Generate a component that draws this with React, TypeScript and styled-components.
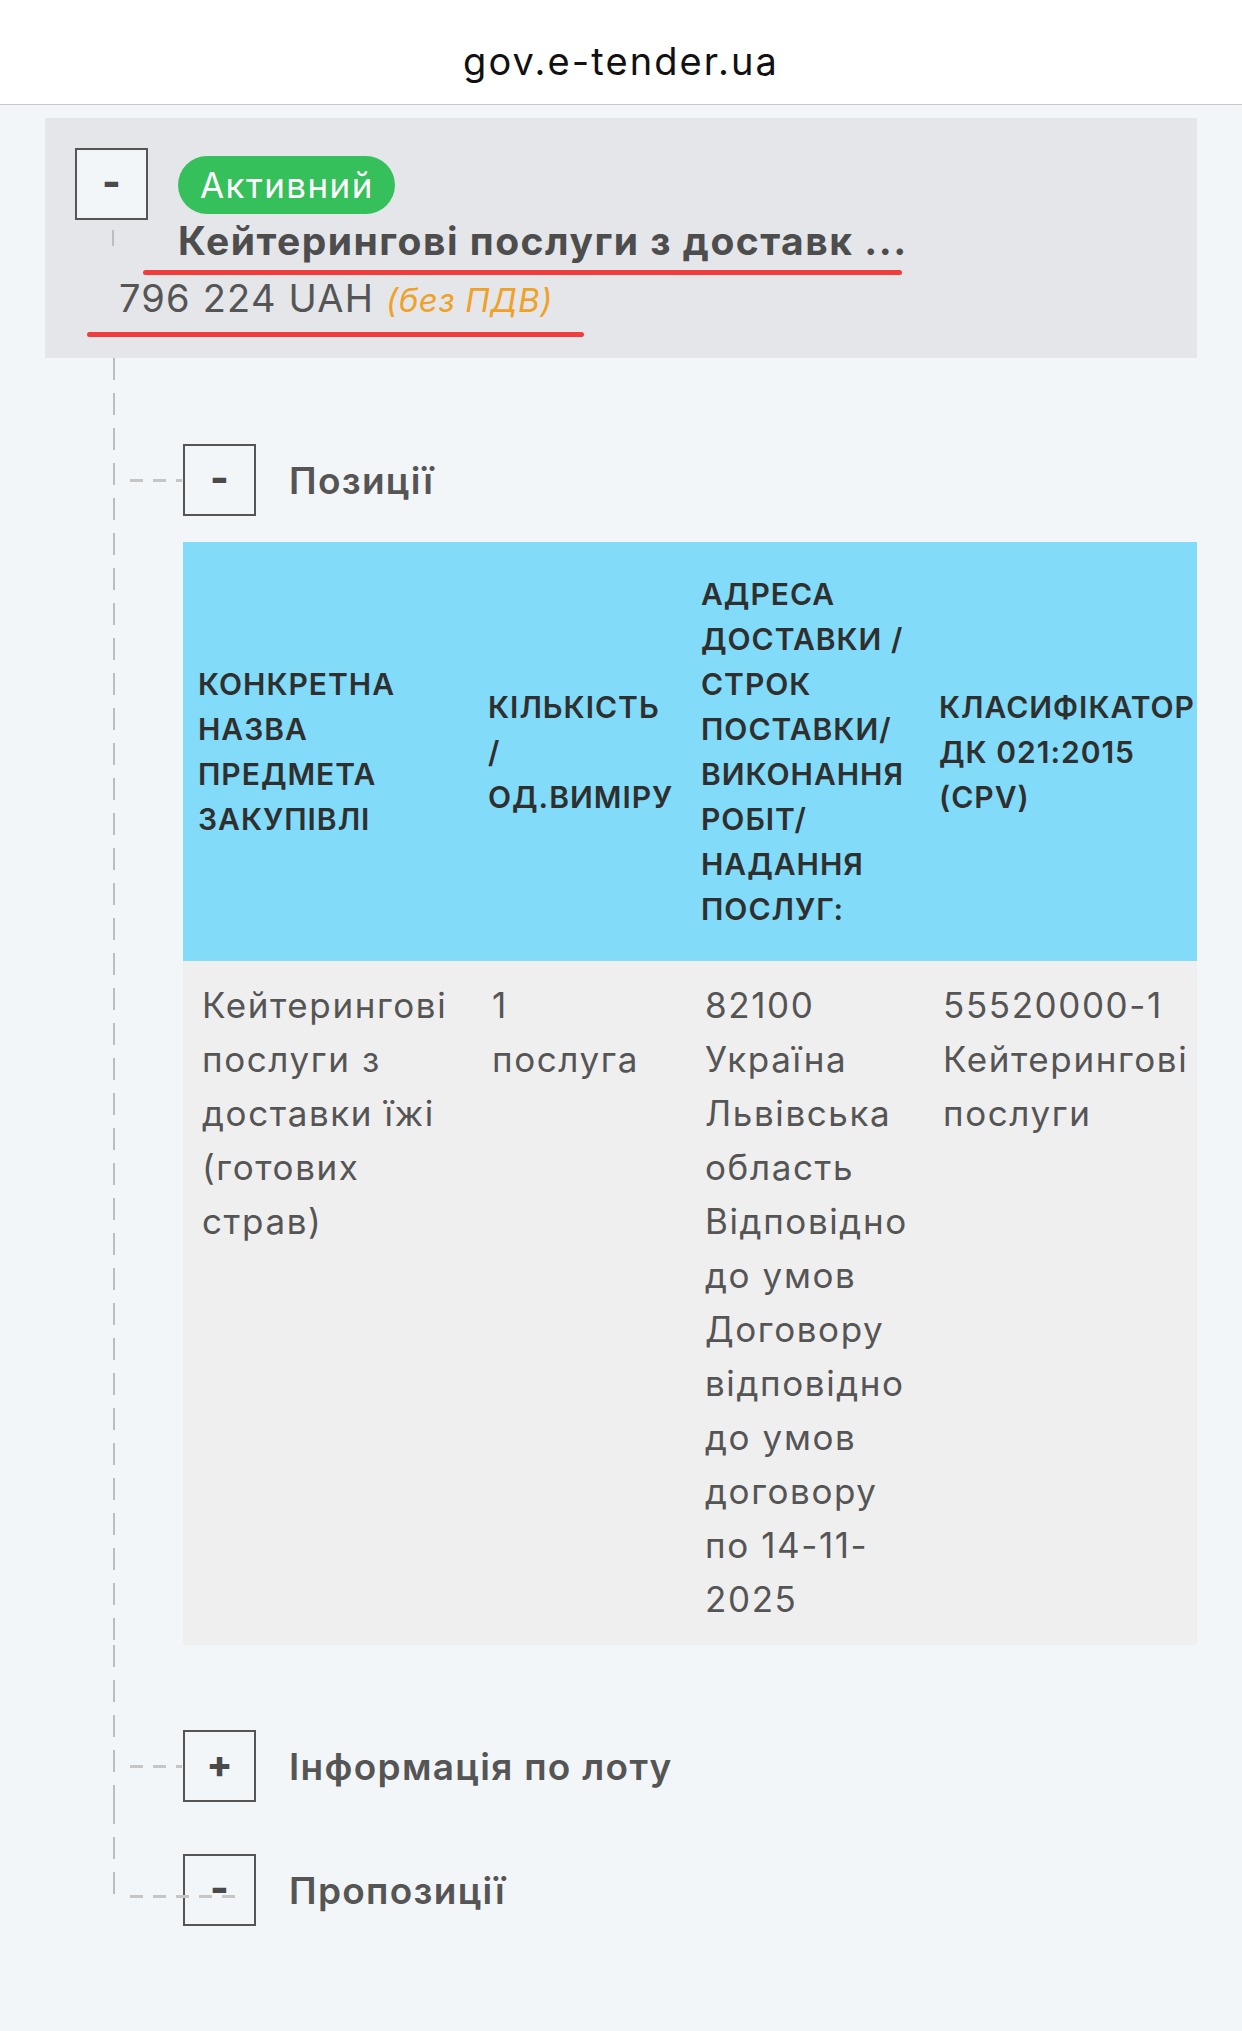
import styled, { createGlobalStyle } from 'styled-components';

const GlobalStyle = createGlobalStyle`
  html, body {
    margin: 0;
    padding: 0;
  }
  body {
    background: #f3f6f9;
    font-family: Inter, "Noto Sans", sans-serif;
    -webkit-font-smoothing: antialiased;
  }
`;

const columns = [290, 213, 238, 300];

const headings = [
  'Конкретна назва предмета закупівлі',
  'Кількість / од.виміру',
  'Адреса доставки / строк поставки/ виконання робіт/ надання послуг:',
  'Класифікатор ДК 021:2015 (CPV)',
];

const App = () => {
  return (
    <Page>
      <GlobalStyle />
      <AddressBar>
        <Url>gov.e-tender.ua</Url>
      </AddressBar>

      <Content>
        <LotCard>
          <LotTop>
            <ToggleCol>
              <Toggle $inCard>-</Toggle>
              <Stub />
            </ToggleCol>
            <LotInfo>
              <Badge>Активний</Badge>
              <LotTitle>Кейтерингові послуги з доставк ...</LotTitle>
              <Marker $offset={-35} $width={759} />
            </LotInfo>
          </LotTop>
          <Price>
            796 224 UAH <NoVat>(без ПДВ)</NoVat>
          </Price>
          <Marker $offset={12} $width={497} $top={10} />
        </LotCard>

        <Tree>
          <Branch $gap={86}>
            <BranchHead>
              <Toggle>-</Toggle>
              <BranchLabel>Позиції</BranchLabel>
            </BranchHead>
            <TableWrap>
              <Table>
                <colgroup>
                  {columns.map((w, i) => (
                    <col key={i} style={{ width: w }} />
                  ))}
                </colgroup>
                <thead>
                  <tr>
                    {headings.map((h) => (
                      <Th key={h}>{h}</Th>
                    ))}
                  </tr>
                </thead>
                <tbody>
                  <tr>
                    <Td>Кейтерингові послуги з доставки їжі (готових страв)</Td>
                    <Td>
                      <Line>1</Line>
                      <Line>послуга</Line>
                    </Td>
                    <Td>
                      82100 Україна Львівська область Відповідно до умов Договору
                      відповідно до умов договору по 14-11-<wbr />2025
                    </Td>
                    <Td>55520000-1 Кейтерингові послуги</Td>
                  </tr>
                </tbody>
              </Table>
            </TableWrap>
          </Branch>

          <Branch $gap={85}>
            <BranchHead>
              <Toggle $plus>+</Toggle>
              <BranchLabel>Інформація по лоту</BranchLabel>
            </BranchHead>
          </Branch>

          <Branch $gap={52} $last>
            <BranchHead>
              <Toggle>-</Toggle>
              <BranchLabel>Пропозиції</BranchLabel>
            </BranchHead>
          </Branch>
        </Tree>
      </Content>
    </Page>
  );
};

export default App;

const Page = styled.div`
  min-height: 2031px;
  background: #f3f6f9;
`;

const AddressBar = styled.header`
  height: 105px;
  box-sizing: border-box;
  padding-top: 18px;
  display: flex;
  align-items: center;
  justify-content: center;
  background: #ffffff;
  border-bottom: 1px solid #c9c9cc;
`;

const Url = styled.div`
  font-size: 38px;
  letter-spacing: 2.1px;
  color: #111111;
`;

const Content = styled.main`
  padding: 13px 45px 0;
`;

const LotCard = styled.section`
  background: #e4e6ea;
  padding: 30px 30px 21px;
`;

const LotTop = styled.div`
  display: flex;
  align-items: flex-start;
`;

const ToggleCol = styled.div`
  display: flex;
  flex-direction: column;
`;

const Toggle = styled.div<{ $inCard?: boolean; $plus?: boolean }>`
  width: 73px;
  height: 72px;
  box-sizing: border-box;
  border: 2px solid #555555;
  background: ${(p) => (p.$inCard ? '#f3f6f9' : 'transparent')};
  display: flex;
  align-items: center;
  justify-content: center;
  flex-shrink: 0;
  color: #4a4a4a;
  font-size: ${(p) => (p.$plus ? '38px' : '40px')};
  font-weight: 800;
  line-height: 1;
  padding-bottom: ${(p) => (p.$plus ? '4px' : '4px')};
`;

const Stub = styled.div`
  width: 2px;
  height: 16px;
  margin: 10px 0 0 37px;
  background: #bdbdbd;
`;

const LotInfo = styled.div`
  display: flex;
  flex-direction: column;
  align-items: flex-start;
  margin-left: 30px;
`;

const Badge = styled.span`
  display: inline-flex;
  align-items: center;
  height: 58px;
  margin-top: 8px;
  padding: 0 21px 0 22px;
  border-radius: 29px;
  background: #36c05c;
  color: #ffffff;
  font-size: 35px;
  letter-spacing: 1.4px;
`;

const LotTitle = styled.div`
  margin-top: 5px;
  font-size: 39px;
  line-height: 44px;
  font-weight: 700;
  letter-spacing: 1.5px;
  color: #4d4d4d;
  white-space: nowrap;
`;

const Marker = styled.div<{ $offset: number; $width: number; $top?: number }>`
  height: 5px;
  width: ${(p) => p.$width}px;
  margin-top: ${(p) => p.$top ?? 7}px;
  margin-left: ${(p) => p.$offset}px;
  border-radius: 3px;
  background: #f23c3c;
`;

const Price = styled.div`
  margin: 1px 0 0 44px;
  font-size: 38px;
  line-height: 44px;
  letter-spacing: 1.2px;
  color: #555555;
`;

const NoVat = styled.span`
  font-size: 33px;
  font-style: italic;
  letter-spacing: 0.6px;
  color: #f0a128;
`;

const Tree = styled.div`
  margin-left: 68px;
`;

const Branch = styled.div<{ $gap: number; $last?: boolean }>`
  position: relative;
  padding: ${(p) => p.$gap}px 0 0 70px;

  &::before {
    content: '';
    position: absolute;
    left: 0;
    top: 0;
    width: 2px;
    ${(p) => (p.$last ? `height: ${p.$gap + 44}px;` : 'bottom: 0;')}
    background: repeating-linear-gradient(
      to bottom,
      #bdbdbd 0 22px,
      transparent 22px 35px
    );
  }

  &::after {
    content: '';
    position: absolute;
    left: 17px;
    top: ${(p) => p.$gap + (p.$last ? 41 : 35)}px;
    width: ${(p) => (p.$last ? 107 : 52)}px;
    height: 3px;
    z-index: 1;
    background: repeating-linear-gradient(
      to right,
      #c6c6c6 0 13px,
      transparent 13px 23px
    );
  }
`;

const BranchHead = styled.div`
  display: flex;
  align-items: center;
`;

const BranchLabel = styled.div`
  margin-left: 33px;
  font-size: 37px;
  font-weight: 600;
  letter-spacing: 1.3px;
  color: #555555;
`;

const TableWrap = styled.div`
  margin-top: 26px;
  overflow: hidden;
`;

const Table = styled.table`
  width: ${columns.reduce((a, b) => a + b, 0)}px;
  table-layout: fixed;
  border-collapse: collapse;
`;

const Th = styled.th`
  padding: 30px 12px 29px 15px;
  background: #82dbf8;
  color: #2f2f2f;
  font-size: 30px;
  line-height: 45px;
  font-weight: 600;
  letter-spacing: 1px;
  text-transform: uppercase;
  text-align: left;
  vertical-align: middle;
`;

const Td = styled.td`
  padding: 17px 8px 19px 19px;
  background: #efefef;
  color: #555555;
  font-size: 35px;
  line-height: 54px;
  letter-spacing: 1.6px;
  vertical-align: top;
`;

const Line = styled.div`
  white-space: nowrap;
`;
